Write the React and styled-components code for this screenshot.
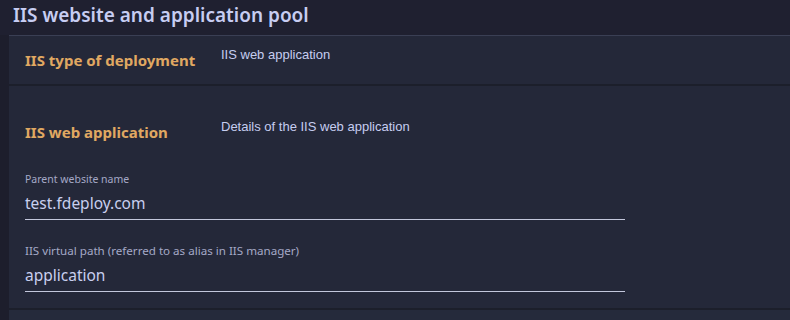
import React from "react";
import styled, { createGlobalStyle } from "styled-components";

const Global = createGlobalStyle`
  html, body { margin: 0; padding: 0; background: #1d1e2c; }
  body { width: 790px; height: 320px; overflow: hidden; font-family: "Noto Sans", sans-serif; }
  * { box-sizing: border-box; }
`;

const Page = styled.div`
  width: 790px;
  height: 320px;
  background: #1d1e2c;
  display: flex;
  flex-direction: column;
`;

const Header = styled.header`
  height: 35px;
  padding: 2px 13px 0;
  background: #1f2030;
`;

const Title = styled.h1`
  margin: 0;
  font-family: "Noto Sans", sans-serif;
  font-weight: 600;
  font-size: 19px;
  line-height: 26px;
  color: #c7cdf2;
`;

const Panel = styled.section`
  margin-left: 9px;
  flex: 1;
  background: #242839;
  border-top: 1px solid #3a3f54;
  display: flex;
  flex-direction: column;
`;

const Row = styled.div`
  padding: ${(p) => p.$pad};
  border-bottom: 2px solid #1c1f2b;
`;

const RowHead = styled.div`
  display: grid;
  grid-template-columns: 196px 1fr;
  align-items: start;
`;

const Heading = styled.h2`
  margin: 3px 0 0;
  font-family: "Noto Sans", sans-serif;
  font-weight: 700;
  font-size: 15px;
  line-height: 20px;
  color: #e0a862;
`;

const Desc = styled.p`
  margin: 0;
  font-family: "Liberation Sans", Arial, sans-serif;
  font-size: 13px;
  line-height: 16px;
  color: #c6cdf0;
`;

const Fields = styled.div`
  margin-top: 30px;
  width: 600px;
  display: flex;
  flex-direction: column;
  gap: 24px;
`;

const Field = styled.label`
  display: flex;
  flex-direction: column;
  gap: 6px;
`;

const FieldLabel = styled.span`
  font-family: "Noto Sans", sans-serif;
  font-size: ${(p) => p.$size || "10.5px"};
  line-height: 14px;
  color: #a4a9c7;
`;

const Value = styled.div`
  font-family: "Noto Sans", sans-serif;
  font-size: 15.5px;
  line-height: 22px;
  padding-bottom: 5px;
  color: #c9cfef;
  border-bottom: 1px solid #c3c7dc;
`;

const Stub = styled.div`
  flex: 1;
  background: #252a3b;
`;

export default function App() {
  return (
    <>
      <Global />
      <Page>
        <Header>
          <Title>IIS website and application pool</Title>
        </Header>
        <Panel>
          <Row $pad="11px 16px 14px">
            <RowHead>
              <Heading>IIS type of deployment</Heading>
              <Desc>IIS web application</Desc>
            </RowHead>
          </Row>
          <Row $pad="33px 16px 16px">
            <RowHead>
              <Heading>IIS web application</Heading>
              <Desc>Details of the IIS web application</Desc>
            </RowHead>
            <Fields>
              <Field>
                <FieldLabel>Parent website name</FieldLabel>
                <Value>test.fdeploy.com</Value>
              </Field>
              <Field>
                <FieldLabel $size="11.6px">IIS virtual path (referred to as alias in IIS manager)</FieldLabel>
                <Value>application</Value>
              </Field>
            </Fields>
          </Row>
          <Stub />
        </Panel>
      </Page>
    </>
  );
}
